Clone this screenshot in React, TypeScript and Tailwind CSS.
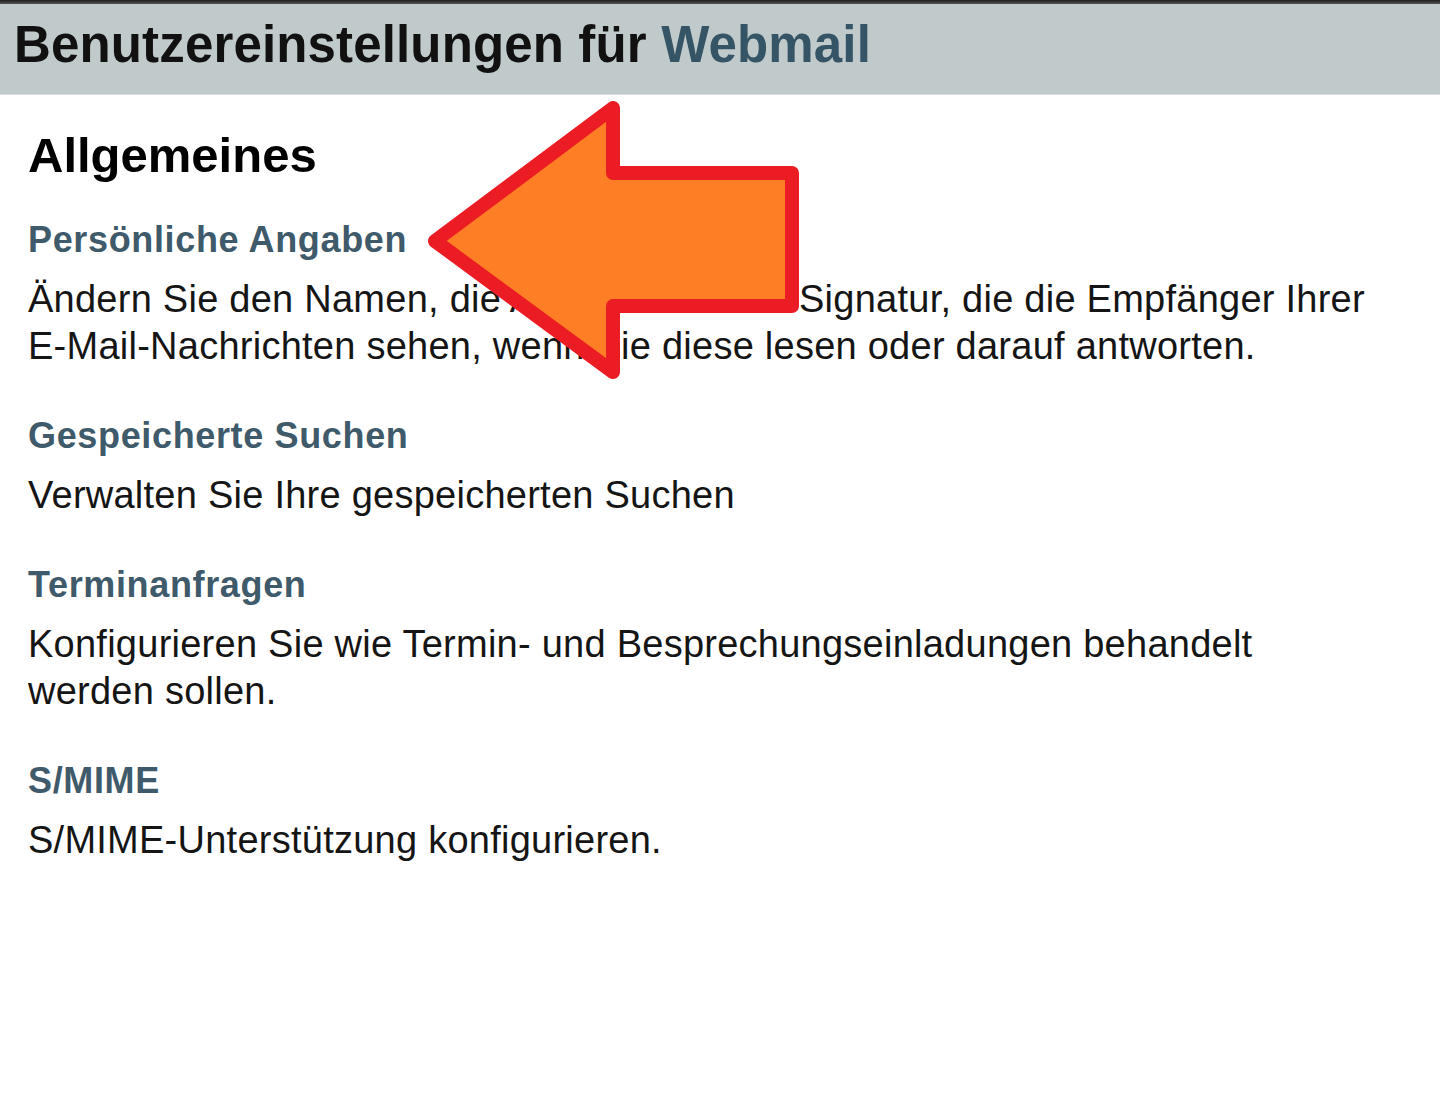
const sections = [
  {
    title: "Persönliche Angaben",
    lines: [
      "Ändern Sie den Namen, die Adresse und die Signatur, die die Empfänger Ihrer",
      "E-Mail-Nachrichten sehen, wenn Sie diese lesen oder darauf antworten.",
    ],
  },
  { title: "Gespeicherte Suchen", lines: ["Verwalten Sie Ihre gespeicherten Suchen"] },
  {
    title: "Terminanfragen",
    lines: [
      "Konfigurieren Sie wie Termin- und Besprechungseinladungen behandelt",
      "werden sollen.",
    ],
  },
  { title: "S/MIME", lines: ["S/MIME-Unterstützung konfigurieren."] },
];

export default function App() {
  return (
    <div className="relative w-[1440px] h-[1106px] bg-white overflow-hidden font-['Liberation_Sans',Arial,sans-serif]">
      <div className="h-[4px] bg-gradient-to-b from-[#1f1f1f] to-[#555]" />
      <div className="h-[91px] bg-[#c1cacb] border-b border-[#d8dee0] flex items-center px-[14px]">
        <h1 className="text-[51px] leading-none font-bold text-[#111] -mt-[10px] tracking-[0.15px]">
          Benutzereinstellungen für <span className="text-[#355466]">Webmail</span>
        </h1>
      </div>

      <div className="pl-[28px] pt-[32px]">
        <h2 className="text-[49px] leading-[56px] font-bold text-black">Allgemeines</h2>
        <div className="mt-[35px] flex flex-col gap-[44px]">
          {sections.map((s) => (
            <div key={s.title}>
              <h3 className="text-[36px] leading-[44px] font-bold text-[#3f5a6a] tracking-[0.65px]">
                {s.title}
              </h3>
              <div className="mt-[14px] text-[38px] leading-[47px] text-[#151515] tracking-[0.25px]">
                {s.lines.map((l) => (
                  <p key={l}>{l}</p>
                ))}
              </div>
            </div>
          ))}
        </div>
      </div>

      {/* annotation arrow over the text */}
      <svg
        className="absolute left-[420px] top-[95px]"
        width="390"
        height="295"
        viewBox="0 0 390 295"
      >
        <polygon
          points="15,146 193,13 193,78 372,78 372,211 193,211 193,277"
          fill="#fd7e24"
          stroke="#ec1c24"
          strokeWidth="14"
          strokeLinejoin="round"
        />
      </svg>
    </div>
  );
}
